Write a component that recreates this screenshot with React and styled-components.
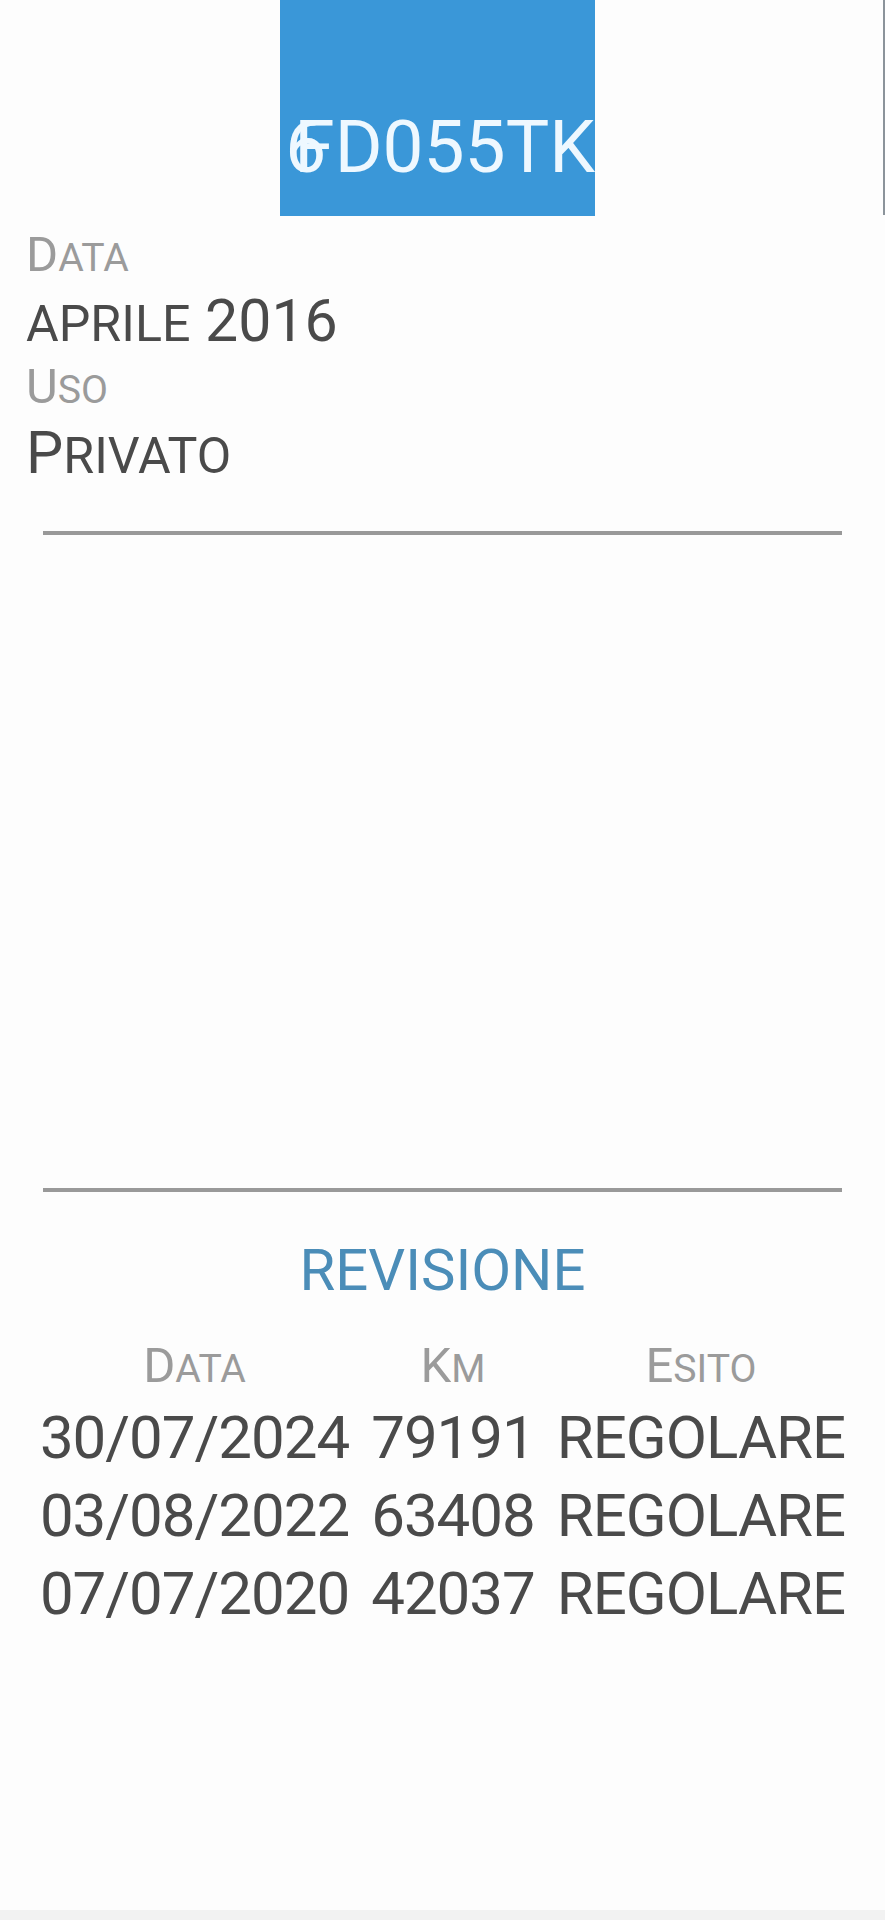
import React from "react"
import styled, { createGlobalStyle } from 'styled-components';

const GlobalStyle = createGlobalStyle`
  html, body {
    margin: 0;
    padding: 0;
    background: #fdfdfd;
  }
  body {
    font-family: Roboto, "Liberation Sans", sans-serif;
  }
`

const revisioni = [
  { data: "30/07/2024", km: "79191", esito: "REGOLARE" },
  { data: "03/08/2022", km: "63408", esito: "REGOLARE" },
  { data: "07/07/2020", km: "42037", esito: "REGOLARE" },
]

// lowercase letters drawn as smaller capitals, like the app does
function smallCaps(text, scale) {
  return text.split("").map((ch, i) =>
    ch !== ch.toUpperCase()
      ? <Caps key={i} $scale={scale}>{ch.toUpperCase()}</Caps>
      : <React.Fragment key={i}>{ch}</React.Fragment>
  )
}

function App() {
  return (
    <Page>
      <GlobalStyle />
      <Header>
        <Plate>
          <PlateText>6</PlateText>
          <PlateText $overlap>FD055TK</PlateText>
        </Plate>
        <EdgeLine />
      </Header>

      <Info>
        <Label>{smallCaps("Data", 0.8)}</Label>
        <Value>{smallCaps("aprile 2016", 0.85)}</Value>
        <Label>{smallCaps("Uso", 0.8)}</Label>
        <Value>{smallCaps("Privato", 0.85)}</Value>
      </Info>

      <Divider />
      <Blank />
      <Divider />

      <Title>REVISIONE</Title>
      <Table>
        <HeadCell>{smallCaps("Data", 0.8)}</HeadCell>
        <HeadCell>{smallCaps("Km", 0.8)}</HeadCell>
        <HeadCell>{smallCaps("Esito", 0.8)}</HeadCell>
        {revisioni.map((r) => (
          <React.Fragment key={r.data}>
            <Cell>{r.data}</Cell>
            <Cell>{r.km}</Cell>
            <Cell>{r.esito}</Cell>
          </React.Fragment>
        ))}
      </Table>
      <Filler />
      <BottomBar />
    </Page>
  )
}

const Page = styled.div`
  height: 1920px;
  display: flex;
  flex-direction: column;
  background: #fdfdfd;
  overflow: hidden;
`

const Header = styled.div`
  height: 216px;
  display: flex;
  justify-content: space-between;
  padding-left: 280px;
`

const Plate = styled.div`
  width: 315px;
  height: 216px;
  background: #3a97d8;
  display: flex;
  justify-content: flex-end;
  align-items: flex-end;
  padding-bottom: 32px;
  box-sizing: border-box;
  overflow: hidden;
`

const PlateText = styled.span`
  font-size: 73px;
  line-height: 73px;
  color: #eef8ff;
  white-space: nowrap;
  margin-left: ${p => p.$overlap ? '-32px' : '0'};
`

const EdgeLine = styled.div`
  width: 2px;
  height: 215px;
  background: #8c949b;
`

const Info = styled.div`
  padding: 7px 0 0 26px;
  display: flex;
  flex-direction: column;
`

const Caps = styled.span`
  font-size: ${p => p.$scale}em;
  line-height: 1;
`

const Label = styled.div`
  font-size: 49px;
  line-height: 64px;
  color: #9b9b9b;
`

const Value = styled.div`
  font-size: 59px;
  line-height: 68px;
  color: #4a4a4a;
`

const Divider = styled.div`
  margin: 44px 43px 0;
  height: 4px;
  background: #999999;
`

const Blank = styled.div`
  height: 609px;
`

const Title = styled.div`
  margin-top: 44px;
  text-align: center;
  font-size: 58px;
  line-height: 68px;
  color: #4b8db8;
`

const Table = styled.div`
  margin-top: 28px;
  display: grid;
  grid-template-columns: repeat(3, auto);
  justify-content: center;
  column-gap: 22px;
  text-align: center;
`

const HeadCell = styled.div`
  font-size: 49px;
  line-height: 67px;
  color: #9b9b9b;
`

const Cell = styled.div`
  font-size: 60px;
  line-height: 78px;
  color: #4a4a4a;
  letter-spacing: -1px;
`

const Filler = styled.div`
  flex: 1;
`

const BottomBar = styled.div`
  height: 10px;
  background: #f2f2f2;
`

export default App;
